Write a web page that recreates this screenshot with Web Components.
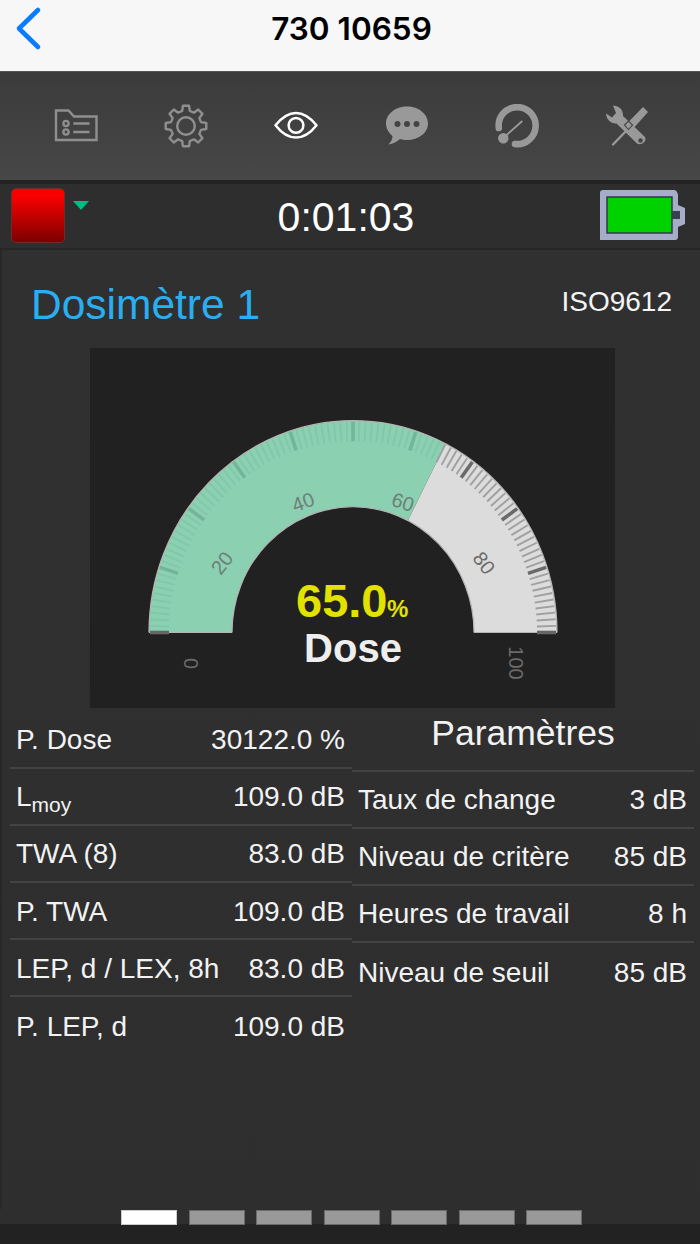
<!DOCTYPE html>
<html lang="fr">
<head>
<meta charset="utf-8">
<title>Dosimètre</title>
<style>
  html, body { margin: 0; height: 100%; background: #222; }
  body { font-family: "Liberation Sans", Arial, sans-serif; }
  #app { display: flex; flex-direction: column; width: 700px; height: 1244px; overflow: hidden; }
</style>
</head>
<body>
<div id="app">
  <app-navbar>730 10659</app-navbar>
  <app-toolbar></app-toolbar>
  <app-status time="0:01:03"></app-status>
  <dose-panel></dose-panel>
</div>

<script>
class AppNavbar extends HTMLElement {
  constructor() {
    super();
    this.attachShadow({ mode: "open" });
  }

  connectedCallback() {
    this.shadowRoot.innerHTML = `
      <style>
        :host {
          display: flex;
          align-items: flex-start;
          justify-content: center;
          box-sizing: border-box;
          height: 72px;
          background: #f7f7f7;
          border-bottom: 1px solid #555;
          position: relative;
        }
        .back { position: absolute; left: 0; top: 0; }
        .title {
          margin: 9px 0 0 3px;
          font: 600 31.5px/40px Inter, "Liberation Sans", sans-serif;
          color: #000;
        }
      </style>
      <svg class="back" width="60" height="60" viewBox="0 0 60 60">
        <path d="M38 10 L19 28.5 L38 47" fill="none" stroke="#0a7cff" stroke-width="4.6" stroke-linecap="round" stroke-linejoin="round"/>
      </svg>
      <div class="title"><slot></slot></div>
    `;
  }
}

// outline of a gear, teeth are trapezoids
function gearPath(cx, cy, outer, root, teeth) {
  const pts = [];
  const step = (Math.PI * 2) / teeth;
  for (let i = 0; i < teeth; i++) {
    const a = i * step - Math.PI / 2;
    const at = (r, d) => [
      (cx + r * Math.cos(a + d)).toFixed(2),
      (cy + r * Math.sin(a + d)).toFixed(2),
    ].join(" ");
    pts.push(at(root, -step * 0.32), at(outer, -step * 0.19), at(outer, step * 0.19), at(root, step * 0.32));
  }
  return "M" + pts.join(" L") + " Z";
}

class AppToolbar extends HTMLElement {
  constructor() {
    super();
    this.attachShadow({ mode: "open" });
  }

  connectedCallback() {
    this.shadowRoot.innerHTML = `
      <style>
        :host {
          display: flex;
          align-items: center;
          box-sizing: border-box;
          height: 112px;
          padding: 0 51px 0 54px;
          justify-content: space-between;
          background: linear-gradient(#3b3b3b, #474747);
          border-bottom: 4px solid #222;
        }
        svg { display: block; width: 44px; height: 44px; }
      </style>
      <svg viewBox="0 0 44 44">
        <g fill="none" stroke="#8f8f8f" stroke-width="2.4">
          <path d="M2 6.5 H14.5 L20 12.5 H42.5 V36 H2 Z"/>
          <circle cx="12" cy="19.5" r="2.6"/>
          <circle cx="12" cy="28" r="2.6"/>
          <path d="M19.3 19.5 H35.5 M19.3 28 H35.5"/>
        </g>
      </svg>
      <svg viewBox="0 0 44 44">
        <path d="${gearPath(22, 22, 20.5, 15.5, 8)}" fill="none" stroke="#8f8f8f" stroke-width="2.4" stroke-linejoin="round"/>
        <circle cx="22" cy="22" r="8.8" fill="none" stroke="#8f8f8f" stroke-width="2.4"/>
      </svg>
      <svg viewBox="0 0 44 44">
        <path d="M1.5 21.3 C9 12 15 9 22 9 C29 9 35 12 42.5 21.3 C35 31 29 33.6 22 33.6 C15 33.6 9 31 1.5 21.3 Z" fill="none" stroke="#fff" stroke-width="2.5" stroke-linejoin="round"/>
        <circle cx="22" cy="21.3" r="7.4" fill="none" stroke="#fff" stroke-width="2.5"/>
      </svg>
      <svg viewBox="0 0 44 44">
        <path d="M22 2.5 C33.5 2.5 43 10 43 19.5 C43 29 33.5 36 22 36 C19.5 36 17.5 35.8 15 35 C12.5 37.5 8 40 3.5 40.5 C6 38 7.5 35 7.5 32 C3.5 28.5 1 24.5 1 19.5 C1 10 10.5 2.5 22 2.5 Z" fill="#999"/>
        <circle cx="12.5" cy="20" r="3" fill="#444"/>
        <circle cx="22" cy="20" r="3" fill="#444"/>
        <circle cx="31.5" cy="20" r="3" fill="#444"/>
      </svg>
      <svg viewBox="0 0 44 44">
        <path d="M3.8 24 A18.5 18.5 0 1 1 20 40" fill="none" stroke="#999" stroke-width="6.6" stroke-linecap="round"/>
        <circle cx="8.3" cy="34.3" r="5.2" fill="#999"/>
        <path d="M10 32.5 L27.3 17" stroke="#999" stroke-width="1.8"/>
      </svg>
      <svg viewBox="0 0 44 44">
        <path d="M8 1.5 C13 1.5 18.5 5 18 12 L40 33 C42 37 37 42 32 39.5 L11.5 19.5 C6 20 1 15 1 9.5 L7 13.5 L11 9 Z" fill="#999"/>
        <circle cx="35.5" cy="36.5" r="2.2" fill="#444"/>
        <path d="M38 3 L43 8 L27 26 L21 20.5 Z" fill="#999"/>
        <path d="M23 25 L8 40.5" stroke="#999" stroke-width="2.4" stroke-linecap="round"/>
        <path d="M19.5 21 L23.5 17 L27.5 21 L23.5 25.5 Z" fill="none" stroke="#444" stroke-width="1.1"/>
      </svg>
    `;
  }
}

class AppStatus extends HTMLElement {
  constructor() {
    super();
    this.attachShadow({ mode: "open" });
  }

  connectedCallback() {
    this.shadowRoot.innerHTML = `
      <style>
        :host {
          display: grid;
          grid-template-columns: 1fr auto 1fr;
          align-items: start;
          box-sizing: border-box;
          height: 66px;
          padding: 4px 15px 0 11px;
          background: #2e2e2e;
          border-bottom: 2px solid #262626;
          color: #fff;
        }
        .left { display: flex; align-items: flex-start; gap: 8px; }
        .rec {
          box-sizing: border-box;
          width: 54px;
          height: 55px;
          border-radius: 5px;
          border: 1.5px solid #742a2a;
          background: linear-gradient(#f80000 15%, #7c0000);
        }
        .arrow {
          width: 0;
          height: 0;
          margin-top: 13px;
          border-left: 8.5px solid transparent;
          border-right: 8.5px solid transparent;
          border-top: 9px solid #00bd86;
        }
        .time { font-size: 41px; line-height: 48px; margin: 5px 0 0 -4px; }
        svg { justify-self: end; display: block; margin-top: 2px; }
      </style>
      <div class="left"><div class="rec"></div><div class="arrow"></div></div>
      <div class="time">${this.getAttribute("time")}</div>
      <svg width="85" height="50" viewBox="0 0 85 50">
        <path d="M3 0 H74 Q77 0 78 5 V15 L85 18 V34 L78 37 V47 Q78 50 75 50 H0 V3 Q0 0 3 0 Z" fill="#a6adc9"/>
        <rect x="7" y="7" width="65" height="36" fill="#00d200" stroke="#30384a" stroke-width="1.5"/>
        <rect x="72" y="21" width="8" height="8" fill="#3a3f4d"/>
      </svg>
    `;
  }
}

class DoseGauge extends HTMLElement {
  constructor() {
    super();
    this.attachShadow({ mode: "open" });
  }

  connectedCallback() {
    this.shadowRoot.innerHTML = `
      <style>
        :host {
          display: block;
          width: 525px;
          height: 360px;
          margin-left: 88px;
          background: #212121;
        }
        svg { display: block; }
        text { font-family: "Liberation Sans", Arial, sans-serif; }
      </style>
      <svg width="525" height="360" viewBox="0 0 525 360">${this.drawGauge(65)}</svg>
    `;
  }

  drawGauge(value) {
    const cx = 263, cy = 284.5;
    const point = (pct, rx, ry) => {
      const a = Math.PI - (pct / 100) * Math.PI;
      return [cx + rx * Math.cos(a), cy - ry * Math.sin(a)];
    };
    const outerX = 204, outerY = 211.8, innerX = 121, innerY = 125.8;

    const band = (from, to, fill) => {
      const [ax, ay] = point(from, outerX, outerY);
      const [bx, by] = point(to, outerX, outerY);
      const [c, d] = point(to, innerX, innerY);
      const [e, f] = point(from, innerX, innerY);
      return `<path d="M${ax} ${ay} A${outerX} ${outerY} 0 0 1 ${bx} ${by} L${c} ${d} A${innerX} ${innerY} 0 0 0 ${e} ${f} Z" fill="${fill}"/>`;
    };

    let ticks = "";
    for (let i = 0; i <= 100; i++) {
      const major = i % 10 === 0;
      const end = i === 0 || i === 100;
      const [x1, y1] = point(i, outerX - 1, outerY - 1);
      const [x2, y2] = point(i, outerX - 20, outerY - 20.5);
      let colour;
      if (i < value) {
        colour = major ? "#72b598" : "#80c8a9";
      } else {
        colour = major ? "#6a6a6a" : "#a0a0a0";
      }
      if (end) colour = "#666";
      ticks += `<line x1="${x1}" y1="${y1}" x2="${x2}" y2="${y2}" stroke="${colour}" stroke-width="${major ? 3.6 : 1.9}"/>`;
    }

    const label = (text, x, y, rot, fill) =>
      `<text x="${x}" y="${y}" transform="rotate(${rot} ${x} ${y})" text-anchor="middle" dominant-baseline="central" font-size="20" fill="${fill}">${text}</text>`;

    return `
      ${band(0, value, "#8ad0b1")}
      ${band(value, 100, "#dcdcdc")}
      <path d="M${cx - outerX} ${cy} A${outerX} ${outerY} 0 0 1 ${cx + outerX} ${cy} M${cx - innerX} ${cy} A${innerX} ${innerY} 0 0 1 ${cx + innerX} ${cy} M${cx - outerX} ${cy} H${cx - innerX} M${cx + innerX} ${cy} H${cx + outerX}" fill="none" stroke="#b5b5b5" stroke-width="1.2"/>
      ${ticks}
      ${label("0", 101, 315.5, -90, "#6b6b6b")}
      ${label("20", 132, 215, -52, "#6f7f78")}
      ${label("40", 213, 154, -20, "#6f7f78")}
      ${label("60", 313, 154, 18, "#6f7f78")}
      ${label("80", 394, 215, 53, "#6b6b6b")}
      ${label("100", 426, 315, 90, "#6b6b6b")}
      <text x="206" y="269" font-size="47" font-weight="700" fill="#e2e200">65.0</text>
      <text x="297" y="269" font-size="24" font-weight="700" fill="#e2e200">%</text>
      <text x="263" y="314" text-anchor="middle" font-size="40" font-weight="700" fill="#eeeeee">Dose</text>
    `;
  }
}

class DataRow extends HTMLElement {
  constructor() {
    super();
    this.attachShadow({ mode: "open" });
  }

  connectedCallback() {
    this.shadowRoot.innerHTML = `
      <style>
        :host {
          display: flex;
          justify-content: space-between;
          align-items: center;
          box-sizing: border-box;
          height: 57.2px;
          padding: 2px 7px 0 6px;
          border-bottom: 2px solid #434343;
          font-size: 28px;
          color: #f2f2f2;
          white-space: nowrap;
        }
        :host(:last-child) { border-bottom: none; }
      </style>
      <span><slot name="label"></slot></span>
      <span><slot name="value"></slot></span>
    `;
  }
}

class DosePanel extends HTMLElement {
  constructor() {
    super();
    this.attachShadow({ mode: "open" });
  }

  connectedCallback() {
    const left = [
      ["P. Dose", "30122.0 %"],
      ["L<sub>moy</sub>", "109.0 dB"],
      ["TWA (8)", "83.0 dB"],
      ["P. TWA", "109.0 dB"],
      ["LEP, d / LEX, 8h", "83.0 dB"],
      ["P. LEP, d", "109.0 dB"],
    ];
    const right = [
      ["Taux de change", "3 dB"],
      ["Niveau de critère", "85 dB"],
      ["Heures de travail", "8 h"],
      ["Niveau de seuil", "85 dB"],
    ];
    const rows = (list) => list.map(([label, value]) =>
      `<data-row><span slot="label">${label}</span><span slot="value">${value}</span></data-row>`).join("");

    this.shadowRoot.innerHTML = `
      <style>
        :host {
          display: flex;
          flex-direction: column;
          flex: 1;
          min-height: 0;
          background: linear-gradient(#303030, #2e2e2e);
          border-left: 2px solid #282828;
          color: #f2f2f2;
        }
        header {
          display: flex;
          justify-content: space-between;
          align-items: center;
          box-sizing: border-box;
          height: 98px;
          padding: 12px 28px 0 29px;
        }
        h1 { margin: 0; font-size: 42.5px; font-weight: 400; color: #2aaef2; }
        .std { font-size: 28px; margin-top: -7px; color: #f4f4f4; }
        .tables {
          display: grid;
          grid-template-columns: 342px 342px;
          margin: 3.5px 0 0 8px;
        }
        .head {
          height: 60px;
          box-sizing: border-box;
          border-bottom: 2px solid #434343;
          text-align: center;
          font-size: 35.5px;
          line-height: 42px;
        }
        sub { font-size: 21px; vertical-align: -6px; line-height: 0; }
        page-dots { margin-top: auto; }
      </style>
      <header><h1>Dosimètre 1</h1><span class="std">ISO9612</span></header>
      <dose-gauge></dose-gauge>
      <div class="tables">
        <div class="col">${rows(left)}</div>
        <div class="col"><div class="head">Paramètres</div>${rows(right)}</div>
      </div>
      <page-dots count="7"></page-dots>
    `;
  }
}

class PageDots extends HTMLElement {
  constructor() {
    super();
    this.attachShadow({ mode: "open" });
  }

  connectedCallback() {
    const count = Number(this.getAttribute("count"));
    let bars = "";
    for (let i = 0; i < count; i++) {
      bars += `<i class="${i === 0 ? "on" : ""}"></i>`;
    }
    this.shadowRoot.innerHTML = `
      <style>
        :host {
          display: flex;
          gap: 11.5px;
          height: 35px;
          box-sizing: border-box;
          padding: 1px 0 0 121px;
          margin-left: -2px;
          background: linear-gradient(#2e2e2e 15px, #222 15px);
        }
        i {
          display: block;
          box-sizing: border-box;
          width: 56px;
          height: 15px;
          background: #999;
          border: 1px solid #6a6a6a;
        }
        i.on { background: #fff; border-color: #ccc; }
      </style>
      ${bars}
    `;
  }
}

customElements.define("app-navbar", AppNavbar);
customElements.define("app-toolbar", AppToolbar);
customElements.define("app-status", AppStatus);
customElements.define("dose-gauge", DoseGauge);
customElements.define("data-row", DataRow);
customElements.define("page-dots", PageDots);
customElements.define("dose-panel", DosePanel);
</script>
</body>
</html>
